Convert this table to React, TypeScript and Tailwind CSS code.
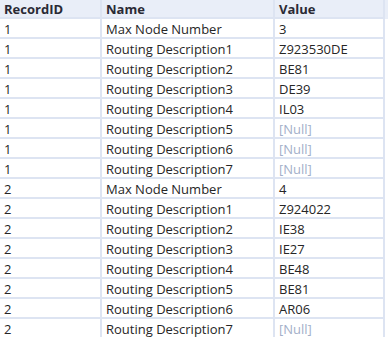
const rows: [string, string, string | null][] = [
  ["1", "Max Node Number", "3"],
  ["1", "Routing Description1", "Z923530DE"],
  ["1", "Routing Description2", "BE81"],
  ["1", "Routing Description3", "DE39"],
  ["1", "Routing Description4", "IL03"],
  ["1", "Routing Description5", null],
  ["1", "Routing Description6", null],
  ["1", "Routing Description7", null],
  ["2", "Max Node Number", "4"],
  ["2", "Routing Description1", "Z924022"],
  ["2", "Routing Description2", "IE38"],
  ["2", "Routing Description3", "IE27"],
  ["2", "Routing Description4", "BE48"],
  ["2", "Routing Description5", "BE81"],
  ["2", "Routing Description6", "AR06"],
  ["2", "Routing Description7", null],
];

const cell = "border-r-2 border-b-2 border-[#dde4f2] pl-[4px] whitespace-pre overflow-hidden";

export default function App() {
  return (
    <div className="w-[388px] h-[337px] overflow-hidden bg-white text-[13px] text-[#262626] font-['Open_Sans',sans-serif]">
      <div className="flex h-[19px] bg-[#e9eef8] font-bold text-[#2a2a35] leading-[18px]">
        <div className={`${cell} w-[102px]`}>RecordID</div>
        <div className={`${cell} w-[173px]`}>Name</div>
        <div className={`${cell} w-[110px]`}>Value</div>
      </div>
      {rows.map((r, i) => (
        <div key={i} className="flex h-[20px] leading-[21px]">
          <div className={`${cell} w-[102px]`}>{r[0]}</div>
          <div className={`${cell} w-[173px]`}>{r[1]}</div>
          <div className={`${cell} w-[110px]`}>
            {r[2] === null ? <span className="text-[#a3afc9]">[Null]</span> : r[2]}
          </div>
        </div>
      ))}
    </div>
  );
}
